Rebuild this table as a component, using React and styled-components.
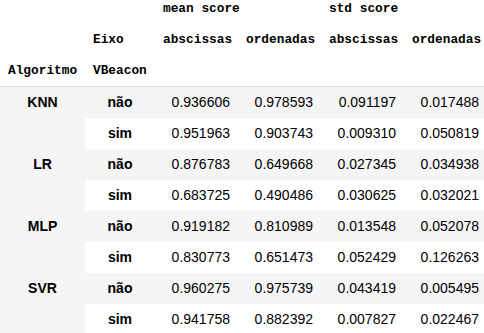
import React from 'react'
import styled, { createGlobalStyle } from 'styled-components'

const Global = createGlobalStyle`
    html, body {
        margin: 0;
        padding: 0;
        background: white;
        overflow: hidden;
    }
`

const Frame = styled.div`
    width: 484px;
    height: 333px;
    overflow: hidden;
`
const Table = styled.table`
    margin-top: -7px;
    border-collapse: collapse;
    border-spacing: 0;
    table-layout: fixed;
    width: 487px;
    color: #000;
    font-family: "Liberation Sans", Arial, sans-serif;
    font-size: 14px;
`
const Col = styled.col`
    width: ${p => p.w}px;
`
const HeadRow = styled.tr`
    height: 31px;
    &:last-child th {
        border-bottom: 1px solid #e0e0e0;
    }
`
const Th = styled.th`
    padding: 0 8px;
    font-family: "Liberation Mono", "DejaVu Sans Mono", monospace;
    font-size: 12.8px;
    font-weight: bold;
    line-height: 31px;
    text-align: left;
    white-space: nowrap;
    vertical-align: top;
`
const Row = styled.tr`
    height: 31px;
    background: ${p => (p.odd ? '#f5f5f5' : 'white')};
`
const IndexCell = styled.th`
    padding: 0 8px;
    font-weight: bold;
    line-height: 31px;
    text-align: center;
    white-space: nowrap;
    vertical-align: top;
    background: ${p => (p.odd ? '#f5f5f5' : 'white')};
`
const Td = styled.td`
    padding: 0 8px;
    line-height: 31px;
    text-align: right;
    white-space: nowrap;
    vertical-align: top;
`

const data = [
    ['KNN', 'não', '0.936606', '0.978593', '0.091197', '0.017488'],
    ['KNN', 'sim', '0.951963', '0.903743', '0.009310', '0.050819'],
    ['LR', 'não', '0.876783', '0.649668', '0.027345', '0.034938'],
    ['LR', 'sim', '0.683725', '0.490486', '0.030625', '0.032021'],
    ['MLP', 'não', '0.919182', '0.810989', '0.013548', '0.052078'],
    ['MLP', 'sim', '0.830773', '0.651473', '0.052429', '0.126263'],
    ['SVR', 'não', '0.960275', '0.975739', '0.043419', '0.005495'],
    ['SVR', 'sim', '0.941758', '0.882392', '0.007827', '0.022467'],
]

const App = () => {
    return (
        <Frame>
            <Global />
            <Table>
                <colgroup>
                    {[85, 70, 83, 83, 83, 83].map((w, i) => <Col key={i} w={w} />)}
                </colgroup>
                <thead>
                    <HeadRow>
                        <Th />
                        <Th />
                        <Th colSpan={2}>mean score</Th>
                        <Th colSpan={2}>std score</Th>
                    </HeadRow>
                    <HeadRow>
                        <Th />
                        <Th>Eixo</Th>
                        <Th>abscissas</Th>
                        <Th>ordenadas</Th>
                        <Th>abscissas</Th>
                        <Th>ordenadas</Th>
                    </HeadRow>
                    <HeadRow>
                        <Th>Algoritmo</Th>
                        <Th>VBeacon</Th>
                        <Th />
                        <Th />
                        <Th />
                        <Th />
                    </HeadRow>
                </thead>
                <tbody>
                    {data.map((r, i) => {
                        const odd = i % 2 === 0
                        return (
                            <Row key={i} odd={odd}>
                                {odd && <IndexCell rowSpan={2} odd>{r[0]}</IndexCell>}
                                <IndexCell odd={odd}>{r[1]}</IndexCell>
                                {r.slice(2).map((v, j) => <Td key={j}>{v}</Td>)}
                            </Row>
                        )
                    })}
                </tbody>
            </Table>
        </Frame>
    )
}

export default App
